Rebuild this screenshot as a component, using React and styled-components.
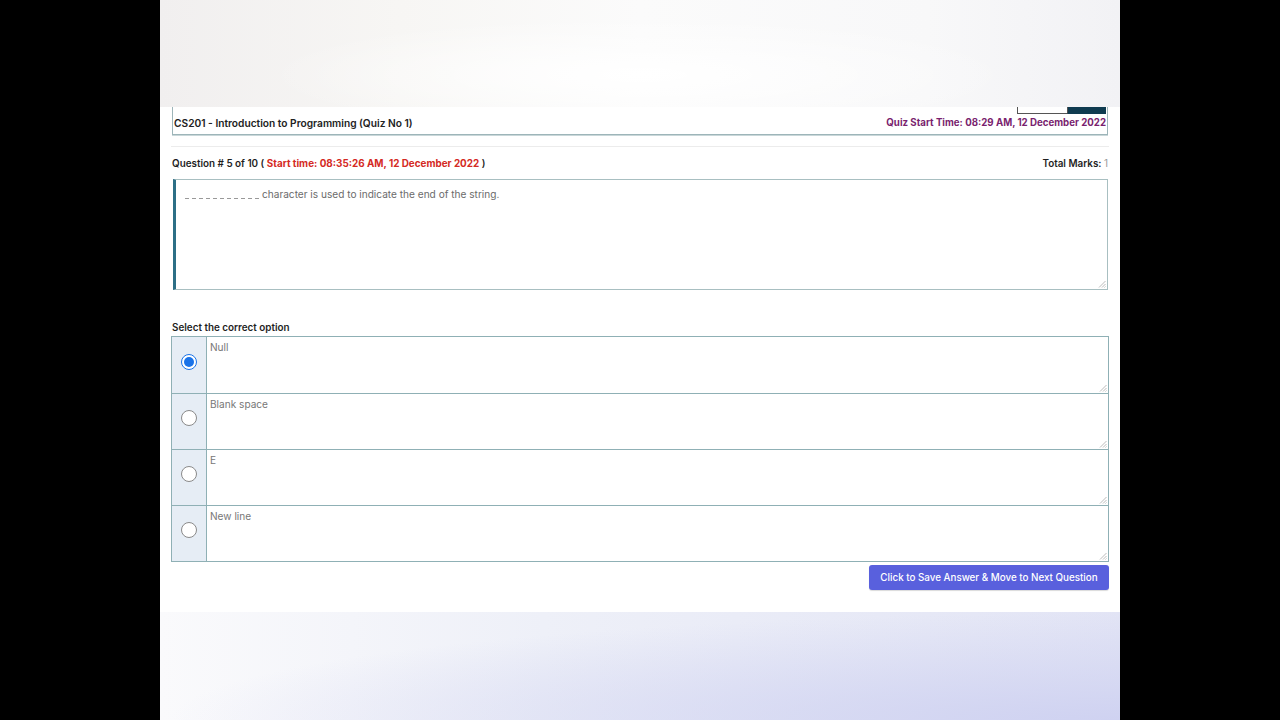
import React from "react";
import styled, { createGlobalStyle } from "styled-components";

const Global = createGlobalStyle`
  html, body { margin: 0; padding: 0; background: #000; }
  body { font-family: "Inter", "Liberation Sans", sans-serif; }
  * { box-sizing: border-box; }
`;

const Stage = styled.div`
  width: 1280px;
  height: 720px;
  background: #000;
  display: flex;
  justify-content: center;
`;

const Screen = styled.div`
  width: 960px;
  height: 720px;
  display: flex;
  flex-direction: column;
  background: #fff;
`;

const TopBlur = styled.div`
  height: 107px;
  background:
    radial-gradient(ellipse at 50% 70%, #ffffff 0%, rgba(255,255,255,0) 55%),
    linear-gradient(90deg, #f1efef 0%, #f7f6f4 25%, #fbfbfb 50%, #f8f8f9 80%, #f2f2f5 100%);
`;

const Content = styled.div`
  flex: 1;
  display: flex;
  flex-direction: column;
  padding: 0 11px 0 11px;
  background: #fff;
`;

const BottomBlur = styled.div`
  height: 108px;
  background:
    radial-gradient(ellipse at 100% 100%, #cfd2f1 0%, rgba(207,210,241,0) 70%),
    linear-gradient(90deg, #fafafc 0%, #eef0f8 40%, #e2e4f5 100%);
`;

const HeaderBar = styled.div`
  position: relative;
  height: 28px;
  margin: 0 1px;
  border: 1px solid #9db5b9;
  border-top: none;
  display: flex;
  align-items: center;
  justify-content: space-between;
  padding: 4px 1px 0 1px;
  box-shadow: 0 1px 0 #c9d7d9;
`;

const CutButtons = styled.div`
  position: absolute;
  top: 0;
  right: 1px;
  display: flex;
  height: 7px;
`;

const CutButton = styled.div`
  width: ${(p) => p.$w}px;
  height: 7px;
  background: ${(p) => (p.$dark ? "#0f3b50" : "#fff")};
  border-left: 1px solid #555;
  border-bottom: 1px solid ${(p) => (p.$dark ? "#0f3b50" : "#555")};
`;

const CourseTitle = styled.span`
  font-size: 10.2px;
  font-weight: 600;
  color: #222;
`;

const QuizTime = styled.span`
  font-size: 9.7px;
  font-weight: 700;
  color: #7a1f6f;
`;

const Divider = styled.div`
  height: 1px;
  background: #ececec;
  margin: 11px 0 0 0;
`;

const QuestionRow = styled.div`
  display: flex;
  justify-content: space-between;
  align-items: center;
  margin-top: 10px;
  height: 12px;
  padding: 0 1px;
`;

const Label = styled.span`
  font-size: 9.9px;
  font-weight: 600;
  color: #1f1f1f;
`;

const Red = styled.span`
  color: #d42a24;
  font-weight: 700;
`;

const Light = styled.span`
  font-weight: 400;
  color: #999;
`;

const QuestionBox = styled.div`
  position: relative;
  margin: 10px 1px 0 2px;
  height: 111px;
  border: 1px solid #a8bfc1;
  border-left: 3px solid #2d6f86;
  padding: 8px 9px;
  font-size: 10.1px;
  color: #6b6b6b;
  line-height: 12px;
`;

const Blank = styled.span`
  display: inline-block;
  width: 77px;
  height: 1px;
  vertical-align: -1px;
  background: repeating-linear-gradient(90deg, #999 0 4px, transparent 4px 7px);
`;

const Grip = styled.svg`
  position: absolute;
  right: 1px;
  bottom: 1px;
  width: 8px;
  height: 8px;
`;

const SectionLabel = styled.div`
  margin-top: 31px;
  padding-left: 1px;
  font-size: 9.9px;
  font-weight: 600;
  color: #1f1f1f;
`;

const Options = styled.div`
  margin-top: 3px;
  border: 1px solid #8fb0b5;
  display: flex;
  flex-direction: column;
`;

const OptionRow = styled.div`
  display: flex;
  height: 56px;
  border-top: ${(p) => (p.$first ? "none" : "1px solid #8fb0b5")};
`;

const RadioCell = styled.div`
  width: 35px;
  flex: none;
  background: #e6edf5;
  border-right: 1px solid #8fb0b5;
  display: flex;
  align-items: center;
  justify-content: center;
  padding-bottom: 7px;
`;

const Radio = styled.span`
  width: 16px;
  height: 16px;
  border-radius: 50%;
  background: #fff;
  border: 1px solid ${(p) => (p.$checked ? "#1a73e8" : "#8a8a8a")};
  display: flex;
  align-items: center;
  justify-content: center;
  &::after {
    content: "";
    width: 10px;
    height: 10px;
    border-radius: 50%;
    background: ${(p) => (p.$checked ? "#1a73e8" : "transparent")};
  }
`;

const OptionText = styled.div`
  position: relative;
  flex: 1;
  background: #fff;
  padding: 4px 3px;
  font-size: 10.1px;
  line-height: 12px;
  color: #777;
`;

const Actions = styled.div`
  display: flex;
  justify-content: flex-end;
  margin-top: 3px;
`;

const NextButton = styled.button`
  height: 25px;
  width: 240px;
  border: none;
  border-radius: 3px;
  background: #5960dd;
  color: #fff;
  font-family: inherit;
  font-size: 9.8px;
  font-weight: 500;
  padding: 0;
  box-shadow: 0 1px 1px rgba(0,0,0,0.15);
`;

const ResizeGrip = () => (
  <Grip viewBox="0 0 8 8">
    <path d="M7.5 1 L1 7.5 M7.5 4 L4 7.5 M7.5 6.5 L6.5 7.5" stroke="#aaa" strokeWidth="0.8" />
  </Grip>
);

const options = ["Null", "Blank space", "E", "New line"];

export default function App() {
  return (
    <>
      <Global />
      <Stage>
        <Screen>
          <TopBlur />
          <Content>
            <HeaderBar>
              <CutButtons>
                <CutButton $w={50} />
                <CutButton $w={39} $dark />
              </CutButtons>
              <CourseTitle>CS201 - Introduction to Programming (Quiz No 1)</CourseTitle>
              <QuizTime>Quiz Start Time: 08:29 AM, 12 December 2022</QuizTime>
            </HeaderBar>
            <Divider />
            <QuestionRow>
              <Label>
                Question # 5 of 10 ( <Red>Start time: 08:35:26 AM, 12 December 2022</Red> )
              </Label>
              <Label>
                Total Marks: <Light>1</Light>
              </Label>
            </QuestionRow>
            <QuestionBox>
              <Blank />character is used to indicate the end of the string.
              <ResizeGrip />
            </QuestionBox>
            <SectionLabel>Select the correct option</SectionLabel>
            <Options>
              {options.map((o, i) => (
                <OptionRow key={o} $first={i === 0}>
                  <RadioCell>
                    <Radio $checked={i === 0} />
                  </RadioCell>
                  <OptionText>
                    {o}
                    <ResizeGrip />
                  </OptionText>
                </OptionRow>
              ))}
            </Options>
            <Actions>
              <NextButton>Click to Save Answer &amp; Move to Next Question</NextButton>
            </Actions>
          </Content>
          <BottomBlur />
        </Screen>
      </Stage>
    </>
  );
}
